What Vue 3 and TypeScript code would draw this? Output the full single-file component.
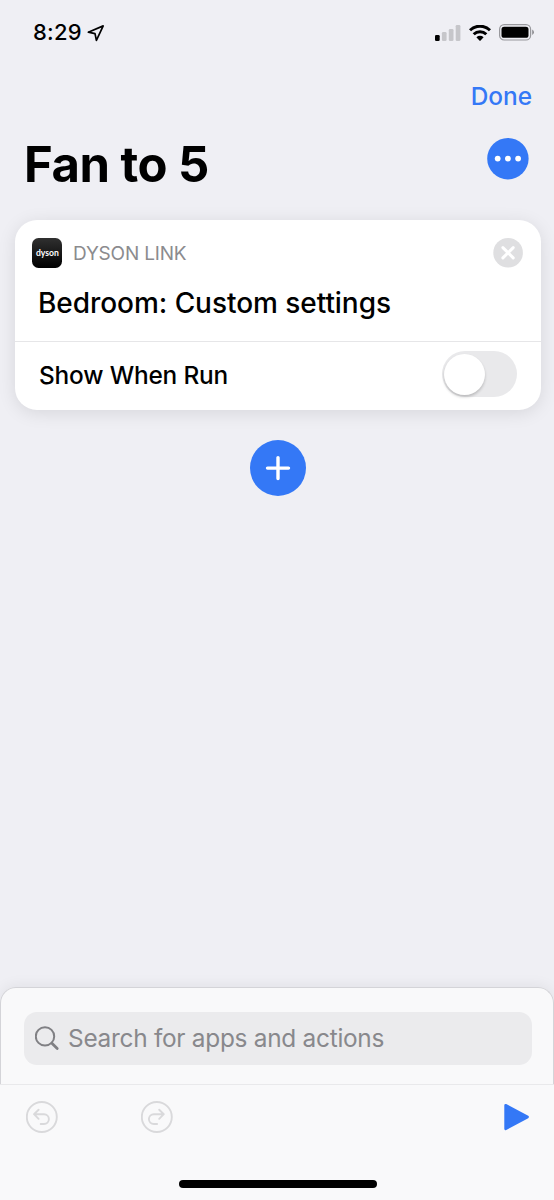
<script setup lang="ts">
import { ref } from 'vue'

const title = ref('Fan to 5')
const showWhenRun = ref(false)
const signalBars = [
  { x: 0, y: 10, h: 6, active: true },
  { x: 6.9, y: 7, h: 9, active: false },
  { x: 13.8, y: 4, h: 12, active: false },
  { x: 20.7, y: 0, h: 16, active: false },
]
</script>

<template>
  <div class="screen">
    <header class="status">
      <span class="time">8:29</span>
      <svg class="location" width="18" height="18" viewBox="0 0 18 18">
        <path d="M16.2 1.9 L1.3 8.2 L8 9.7 L9.4 16.4 Z" fill="none" stroke="#000" stroke-width="1.7" stroke-linejoin="round" />
      </svg>
      <svg class="signal" width="26" height="16" viewBox="0 0 26 16">
        <rect v-for="b in signalBars" :key="b.x" :x="b.x" :y="b.y" width="4.7" :height="b.h" rx="1.3" :fill="b.active ? '#000' : '#c6c6ca'" />
      </svg>
      <svg class="wifi" width="22" height="16" viewBox="0 0 22 16">
        <g fill="none" stroke="#000" stroke-width="3">
          <path d="M1 5.3 A14.2 14.2 0 0 1 21 5.3" />
          <path d="M4.7 9.3 A9 9 0 0 1 17.3 9.3" />
        </g>
        <path d="M7.4 12.2 A5.2 5.2 0 0 1 14.6 12.2 L11.6 15.4 Q11 16 10.4 15.4 Z" />
      </svg>
      <svg class="battery" width="36" height="17" viewBox="0 0 36 17">
        <rect x="0.6" y="0.6" width="31" height="15.4" rx="4.6" fill="none" stroke="#98989c" stroke-width="1.2" />
        <rect x="2.5" y="2.8" width="27" height="11" rx="2.6" />
        <path d="M33.2 5.6 Q35 6.5 35 8.3 Q35 10.1 33.2 11 Z" fill="#8e8e92" />
      </svg>
    </header>

    <nav class="nav"><button class="done">Done</button></nav>

    <div class="heading">
      <h1>{{ title }}</h1>
      <button class="more" aria-label="More">
        <svg width="42" height="42" viewBox="0 0 42 42">
          <circle cx="20.9" cy="20.7" r="20.7" fill="#3478f6" />
          <g fill="#fff"><circle cx="10.7" cy="20.6" r="2.9" /><circle cx="20.9" cy="20.6" r="2.9" /><circle cx="31.1" cy="20.6" r="2.9" /></g>
        </svg>
      </button>
    </div>

    <section class="card">
      <div class="action">
        <div class="source">
          <span class="app-icon"><span>dyson</span></span>
          <span class="app-name">DYSON LINK</span>
          <svg class="close" width="30" height="30" viewBox="0 0 30 30">
            <circle cx="15.1" cy="14.8" r="14.8" fill="#dfdfe1" />
            <path d="M9.9 9.6 L20.2 19.9 M20.2 9.6 L9.9 19.9" stroke="#fff" stroke-width="3" stroke-linecap="round" />
          </svg>
        </div>
        <p class="summary">Bedroom: Custom settings</p>
      </div>
      <div class="option">
        <span class="option-label">Show When Run</span>
        <button class="switch" role="switch" :aria-checked="showWhenRun"><span class="knob"></span></button>
      </div>
    </section>

    <button class="add" aria-label="Add action">
      <svg width="56" height="56" viewBox="0 0 56 56">
        <circle cx="28" cy="28" r="28" fill="#3478f6" />
        <path d="M28 17.6 V38.6 M17.5 28.1 H38.5" stroke="#fff" stroke-width="3.4" stroke-linecap="round" />
      </svg>
    </button>

    <footer class="bottom">
      <div class="panel">
        <div class="search">
          <svg width="26" height="26" viewBox="0 0 26 26" fill="none" stroke="#808084" stroke-linecap="round">
            <circle cx="10" cy="10.4" r="9.2" stroke-width="2" />
            <path d="M16.9 17.3 L22.2 22.5" stroke-width="2.8" />
          </svg>
          <span class="placeholder">Search for apps and actions</span>
        </div>
      </div>
      <div class="toolbar">
        <svg class="undo" width="32" height="32" viewBox="0 0 32 32" fill="none" stroke="#d9d9db" stroke-width="1.9" stroke-linecap="round" stroke-linejoin="round">
          <circle cx="15.8" cy="16" r="15" />
          <path d="M12.6 8.7 L8 13.2 L12.6 17.8 M8.4 13.2 H18 A4.9 4.9 0 0 1 18 23 H14.7" />
        </svg>
        <svg class="redo" width="32" height="32" viewBox="0 0 32 32" fill="none" stroke="#d9d9db" stroke-width="1.9" stroke-linecap="round" stroke-linejoin="round">
          <circle cx="15.8" cy="16" r="15" />
          <path d="M18.2 8.7 L22.8 13.2 L18.2 17.8 M22.4 13.2 H12.8 A4.9 4.9 0 0 0 12.8 23 H16.1" />
        </svg>
        <svg class="play" width="26" height="28" viewBox="0 0 26 28">
          <path d="M1.6 2.2 L23.6 14 L1.6 25.8 Z" fill="#3478f6" stroke="#3478f6" stroke-width="2.6" stroke-linejoin="round" />
        </svg>
      </div>
      <div class="home"></div>
    </footer>
  </div>
</template>

<style>
body { margin: 0; background: #efeff4; }
</style>

<style scoped>
.screen {
  box-sizing: border-box;
  width: 554px;
  height: 1200px;
  display: flex;
  flex-direction: column;
  overflow: hidden;
  background: #efeff4;
  color: #000;
  font-family: Inter, "Liberation Sans", sans-serif;
}
svg { display: block; flex: none; }
button { border: 0; padding: 0; background: none; font-family: inherit; }
.status { display: flex; align-items: center; height: 65px; padding: 0 19px 0 33px; }
.time { width: 49px; margin-top: -1px; font-size: 22px; font-weight: 500; line-height: 30px; letter-spacing: 0.25px; white-space: nowrap; }
.location { margin-left: 5px; }
.signal { margin-left: auto; }
.wifi { margin-left: 8px; }
.battery { margin-left: 8px; }
.nav { display: flex; justify-content: flex-end; align-items: center; height: 61px; padding: 0 22px 2px 0; }
.done { color: #3478f6; font-size: 24.4px; font-weight: 500; line-height: 30px; }
.heading { display: flex; justify-content: space-between; height: 92px; padding: 0 25px 0 24px; }
h1 { margin: 6px 0 0; font-size: 49px; font-weight: 700; line-height: 61px; letter-spacing: -0.5px; white-space: nowrap; }
.more { height: 42px; margin-top: 10px; }
.card {
  margin: 0 13px 0 15px;
  height: 190px;
  flex: none;
  display: flex;
  flex-direction: column;
  border-radius: 22px;
  background: #fff;
  box-shadow: 0 3px 18px rgba(0, 0, 0, 0.1);
}
.action { height: 121px; border-bottom: 1px solid #e6e6e8; }
.source { display: flex; align-items: center; padding: 18px 18px 0 17.4px; height: 30px; }
.app-icon {
  width: 30px;
  height: 30px;
  display: flex;
  align-items: center;
  justify-content: center;
  border-radius: 6.5px;
  background: linear-gradient(#303030, #000);
  color: #fff;
  font-family: Lato, "Open Sans", sans-serif;
  font-size: 8.6px;
  font-weight: 700;
  line-height: 10px;
}
.app-name { margin: 2px 0 0 10.6px; color: #8b8b8e; font-size: 19px; line-height: 24px; letter-spacing: -0.18px; }
.close { margin-left: auto; }
.summary { margin: 17px 0 0 23px; font-size: 28px; font-weight: 450; line-height: 36px; letter-spacing: -0.05px; white-space: nowrap; }
.option { flex: 1; display: flex; align-items: center; justify-content: space-between; padding: 0 24px 4px; }
.option-label { font-size: 24.4px; font-weight: 450; line-height: 30px; margin-top: 2px; letter-spacing: -0.17px; }
.switch { display: flex; align-items: center; width: 75px; height: 46px; padding: 0 2px; border-radius: 23px; background: #e9e9eb; }
.knob { width: 41px; height: 41px; border-radius: 50%; background: #fff; box-shadow: 0 2px 3px rgba(0, 0, 0, 0.2); }
.add { align-self: center; height: 56px; margin: 30px 0 0 2px; }
.bottom { margin-top: auto; height: 213px; flex: none; display: flex; flex-direction: column; background: #f9f9fa; border-radius: 16px 16px 0 0; box-shadow: 0 -2px 14px rgba(0, 0, 0, 0.06); }
.panel { box-sizing: border-box; height: 97px; padding: 24px 21px 0 23px; border: 1px solid #d4d4d8; border-bottom: 0; border-radius: 16px 16px 0 0; }
.search { display: flex; align-items: center; height: 53px; padding-left: 11px; border-radius: 13px; background: #ebebed; }
.placeholder { margin: -2px 0 0 7px; color: #88888c; font-size: 24.4px; line-height: 30px; letter-spacing: -0.27px; white-space: nowrap; }
.toolbar { display: flex; align-items: flex-start; height: 96px; padding: 16px 24px 0 26px; border-top: 1px solid #e9e9eb; box-sizing: border-box; }
.redo { margin-left: 83px; }
.play { margin: 2px 0 0 auto; }
.home { width: 198px; height: 8px; margin-left: 179px; border-radius: 4px; background: #000; }
</style>
